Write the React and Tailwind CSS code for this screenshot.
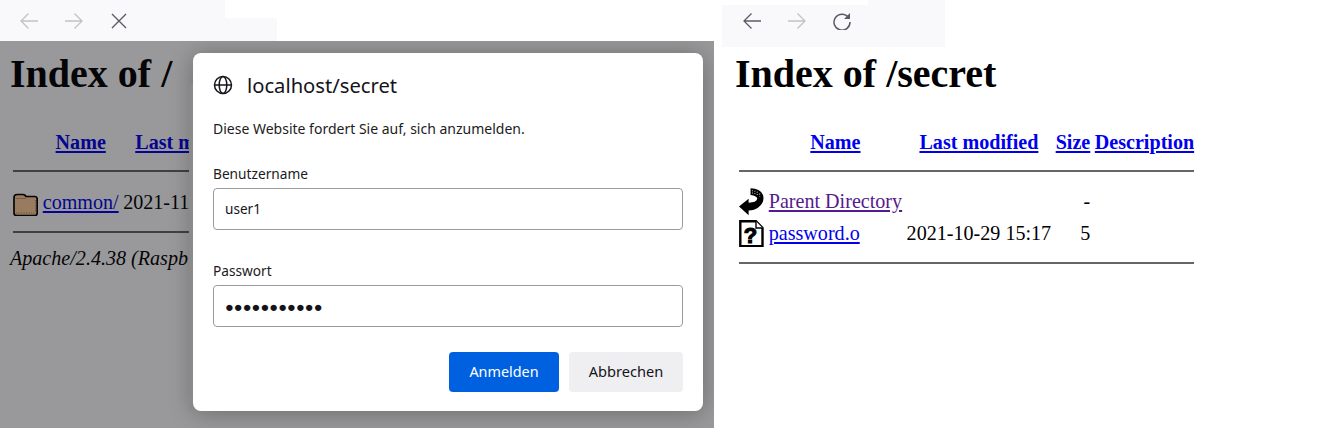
const serif = "font-['Liberation_Serif','Times_New_Roman',serif]";

function Arrow({ dir = "left", className }) {
  return (
    <svg width="18" height="18" viewBox="0 0 18 18" fill="none" stroke="currentColor" strokeWidth="1.3" className={className}>
      {dir === "left" ? <path d="M18 9H1M8.5 1.5 1 9l7.5 7.5" /> : <path d="M0 9h17M9.5 1.5 17 9l-7.5 7.5" />}
    </svg>
  );
}

function FolderIcon() {
  return (
    <svg width="25" height="27.5" viewBox="0 0 25 27.5" className="block">
      <path d="M1 8.5 Q1 5.5 4 5.5 H10 Q12 5.5 13 7.5 H22 Q24.2 7.5 24.2 10 V24 Q24.2 26.5 22 26.5 H3.5 Q1 26.5 1 24 Z" fill="#ffcc99" stroke="#000" strokeWidth="1.7" />
      <path d="M2.5 9.5 H13" stroke="#c89a6e" strokeWidth="1" />
      <path d="M3 24 H23" stroke="#a87c56" strokeWidth="1" strokeDasharray="1.2 1.3" />
      <path d="M22.5 11 V23" stroke="#a87c56" strokeWidth="1" strokeDasharray="1.2 1.3" />
    </svg>
  );
}

function BackIcon() {
  return (
    <svg width="25" height="27.5" viewBox="0 0 26 28" className="block">
      <path d="M0 19 L10 11 L10 15 Q18 15 19 11 Q19 8 12 7 L12 0 Q22 0 25 7 Q27 15 20 20 Q16 23 10 23 L10 28 Z" fill="#000" />
      <path d="M14 2v3.5M16.5 2.5v3.5M19 3.5v3.5M21.5 5.5v3" stroke="#bbb" strokeWidth="1.1" strokeDasharray="1.2 1.2" />
    </svg>
  );
}

function UnknownIcon() {
  return (
    <svg width="25" height="27.5" viewBox="0 0 25 27.5" className="block">
      <path d="M1.3 1.3 H17 L23.5 8 V26.2 H1.3 Z" fill="#fff" stroke="#000" strokeWidth="2.4" />
      <path d="M17 1.3 V8 H23.5" fill="#fff" stroke="#000" strokeWidth="1.4" />
      <text x="11.5" y="22.5" textAnchor="middle" fontSize="22" fontWeight="700" fontFamily="Liberation Sans" fill="#000" stroke="#000" strokeWidth="1.1">?</text>
    </svg>
  );
}

function A({ children, visited }) {
  return <a href="#" className={visited ? "text-[#551a8b] underline" : "text-[#0000ee] underline"}>{children}</a>;
}

function Listing({ rows, className, ruleGap }) {
  return (
    <table className={`border-separate border-spacing-[2.5px] whitespace-nowrap leading-[23px] ${className || ""}`}>
      <thead>
        <tr className="font-bold text-center">
          <th className="p-[1.25px] align-top"><div className="w-[25px] h-[27.5px]"></div></th>
          <th className="p-[1.25px]"><A>Name</A></th>
          <th className="p-[1.25px]"><A>Last modified</A></th>
          <th className="p-[1.25px]"><A>Size</A></th>
          <th className="p-[1.25px]"><A>Description</A></th>
        </tr>
        <tr>
          <th colSpan={5} className="p-[1.25px]"><div className={`mt-[10px] h-[2px] bg-[#666] ${ruleGap}`}></div></th>
        </tr>
      </thead>
      <tbody>
        {rows.map((r) => (
          <tr key={r.name}>
            <td className="p-[1.25px] align-top">{r.icon}</td>
            <td className="p-[1.25px] align-middle"><A visited={r.visited}>{r.name}</A></td>
            <td className="p-[1.25px] text-right align-middle">{r.date}</td>
            <td className="p-[1.25px] text-right align-middle">{r.size}</td>
            <td className="p-[1.25px]"></td>
          </tr>
        ))}
        <tr>
          <th colSpan={5} className="p-[1.25px]"><div className="my-[10px] h-[2px] bg-[#666]"></div></th>
        </tr>
      </tbody>
    </table>
  );
}

function Field({ label, value, password }) {
  return (
    <div className="flex flex-col">
      <label className="text-[13.7px] leading-[20px] text-[#1c1b22]">{label}</label>
      <div className={`mt-[4px] h-[42px] rounded-[4px] border border-[#9a9a9c] bg-white px-[11px] flex items-center text-[#15141a] ${password ? "text-[14.7px]" : "text-[13.6px]"}`}>{value}</div>
    </div>
  );
}

function Dialog() {
  return (
    <div className="absolute left-[193px] top-[12px] w-[510px] h-[358px] bg-white rounded-[8px] shadow-[0_2px_24px_rgba(0,0,0,0.3)] px-[20px] pt-[20px] font-['Noto_Sans',sans-serif]">
      <div className="absolute -left-[4px] top-[31px] bottom-0 w-[4px] bg-[#8a8a8b]"></div>
      <div className="flex items-center gap-[14px] h-[24px]">
        <svg width="20" height="20" viewBox="0 0 20 20" fill="none" stroke="#15141a" strokeWidth="1.5">
          <circle cx="10" cy="10" r="8.5" />
          <ellipse cx="10" cy="10" rx="3.8" ry="8.5" />
          <path d="M1.5 10h17" />
        </svg>
        <span className="text-[20.2px] text-[#15141a]">localhost/secret</span>
      </div>
      <p className="mt-[22px] text-[14px] leading-[20px] text-[#1c1b22]">Diese Website fordert Sie auf, sich anzumelden.</p>
      <div className="mt-[25px]"><Field label="Benutzername" value="user1" /></div>
      <div className="mt-[31px]"><Field label="Passwort" value="●●●●●●●●●●●" password /></div>
      <div className="mt-[25px] flex justify-end gap-[10px]">
        <button className="w-[110px] h-[40px] rounded-[4px] bg-[#0061e0] text-white text-[14.4px]">Anmelden</button>
        <button className="w-[114px] h-[40px] rounded-[4px] bg-[#efeff1] text-[#15141a] text-[14.6px]">Abbrechen</button>
      </div>
    </div>
  );
}

export default function App() {
  return (
    <div className={`w-[1336px] h-[440px] bg-white flex items-start overflow-hidden text-black text-[20.1px] ${serif}`}>
      <div className="w-[714px] shrink-0">
        <div className="relative w-[277px] h-[41px] bg-[#f9f9fb] flex items-start gap-[27px] pl-[20px] pt-[12px] text-[#c2c2c6]">
          <div className="absolute right-0 top-0 w-[52px] h-[18px] bg-white"></div>
          <Arrow />
          <Arrow dir="right" />
          <svg width="16" height="16" viewBox="0 0 16 16" stroke="#5b5b66" strokeWidth="1.4" className="ml-[1px] mt-[1px]"><path d="M1 1l14 14M15 1 1 15" /></svg>
        </div>
        <div className="relative h-[387px] overflow-hidden">
          <div className="h-full bg-white pl-[10px]">
            <h1 className="text-[40px] font-bold leading-[46px] pt-[10px] pb-[28px]">Index of /</h1>
            <Listing ruleGap="mb-[12px]" rows={[{ name: "common/", icon: <FolderIcon />, date: "2021-11-02 10:11", size: "-" }]} />
            <address className="italic leading-[23px] mt-[1px]">Apache/2.4.38 (Raspbian) Server at localhost Port 80</address>
          </div>
          <div className="absolute inset-0 bg-[#0c0c10]/[0.42]"></div>
          <Dialog />
        </div>
      </div>
      <div className="ml-[8px] flex-1">
        <div className="relative w-[223px] h-[47px] bg-[#f9f9fb] flex items-start gap-[27px] pl-[21px] pt-[12px] text-[#5b5b66]">
          <div className="absolute left-0 top-0 w-[146px] h-[5px] bg-white"></div>
          <Arrow />
          <Arrow dir="right" className="text-[#c2c2c6]" />
          <svg width="18" height="18" viewBox="0 0 18 18" fill="none" stroke="currentColor" strokeWidth="1.5">
            <path d="M15.5 5.5A8 8 0 1 0 17 10" />
            <path d="M17 1v6h-6z" fill="currentColor" stroke="none" />
          </svg>
        </div>
        <div className="pl-[13px]">
          <h1 className="text-[40px] font-bold leading-[46px] pt-[4px] pb-[28px]">Index of /secret</h1>
          <Listing className="ml-[1px]" ruleGap="mb-[11px]" rows={[
            { name: "Parent Directory", icon: <BackIcon />, visited: true, date: "", size: "-" },
            { name: "password.o", icon: <UnknownIcon />, date: "2021-10-29 15:17", size: "5" },
          ]} />
        </div>
      </div>
    </div>
  );
}
